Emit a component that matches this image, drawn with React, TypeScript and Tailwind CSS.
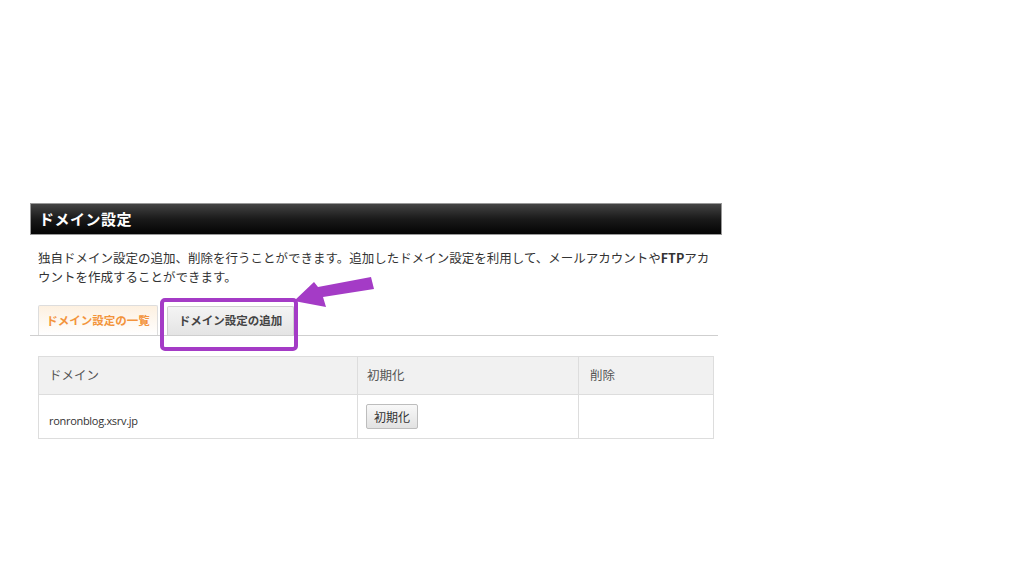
import React from 'react';

const jp = '"Noto Sans CJK JP", "Noto Sans", sans-serif';

export default function App() {
  return (
    <div className="relative w-[1024px] h-[576px] bg-white overflow-hidden" style={{ fontFamily: jp }}>
      <div className="pt-[203px] pl-[30px] w-[722px]">
        {/* Title bar */}
        <div className="h-[32px] flex items-center px-[8px] bg-gradient-to-b from-[#444444] via-[#1a1a1a] to-[#050505] border border-[#999]">
          <h1 className="text-white font-bold text-[15px] tracking-[0.5px]">ドメイン設定</h1>
        </div>

        {/* Description */}
        <p className="pl-[8px] pr-[10px] pt-[13px] text-[12.5px] leading-[19px] text-[#333]">
          独自ドメイン設定の追加、削除を行うことができます。追加したドメイン設定を利用して、メールアカウントや<span className="font-bold">FTP</span>アカ
          <br />
          ウントを作成することができます。
        </p>

        {/* Tabs */}
        <div className="relative mt-[20px] mr-[4px] flex items-end gap-[9px] pl-[8px] border-b border-[#cfcfcf] h-[30px]">
          <div className="h-[30px] w-[120px] flex items-center justify-center border border-b-0 border-[#ddd] rounded-t-[2px] bg-gradient-to-b from-[#fdf0e0] to-white">
            <span className="text-[11.5px] font-bold text-[#f3943c]">ドメイン設定の一覧</span>
          </div>
          <div className="h-[29px] w-[127px] flex items-center justify-center border border-b-0 border-[#cfcfcf] rounded-t-[2px] bg-gradient-to-b from-[#f4f4f4] to-[#e4e4e4]">
            <span className="text-[11.5px] font-bold text-[#444]">ドメイン設定の追加</span>
          </div>
          {/* highlight box */}
          <div className="absolute left-[130px] top-[-8px] w-[138px] h-[53px] border-[4px] border-[#a43bc6] rounded-[5px]" />
        </div>

        {/* Table */}
        <div className="mt-[20px] ml-[8px] w-[676px] border border-[#ddd] text-[12.5px] text-[#555]">
          <div className="grid grid-cols-[319px_221px_1fr] h-[38px] bg-[#f1f1f1] border-b border-[#ddd]">
            <div className="flex items-center pl-[10px] border-r border-[#ddd]">ドメイン</div>
            <div className="flex items-center pl-[9px] border-r border-[#ddd]">初期化</div>
            <div className="flex items-center pl-[11px]">削除</div>
          </div>
          <div className="grid grid-cols-[319px_221px_1fr] h-[43px]">
            <div className="flex items-end pb-[9px] pl-[10px] border-r border-[#ddd] text-[11px] text-[#333] tracking-[-0.3px]" style={{ fontFamily: '"Open Sans", sans-serif' }}>
              ronronblog.xsrv.jp
            </div>
            <div className="flex items-start pt-[9px] pl-[8px] border-r border-[#ddd]">
              <button className="h-[25px] px-[7px] text-[12px] text-[#333] border border-[#bdbdbd] rounded-[2px] bg-gradient-to-b from-[#f8f8f8] to-[#e2e2e2]">
                初期化
              </button>
            </div>
            <div />
          </div>
        </div>
      </div>

      {/* Arrow overlay */}
      <svg className="absolute left-0 top-0" width="1024" height="576" viewBox="0 0 1024 576">
        <polygon
          points="371,277 374,289 323,297 326,307 294,301 314,282 318,287"
          fill="#a43bc6"
        />
      </svg>
    </div>
  );
}
